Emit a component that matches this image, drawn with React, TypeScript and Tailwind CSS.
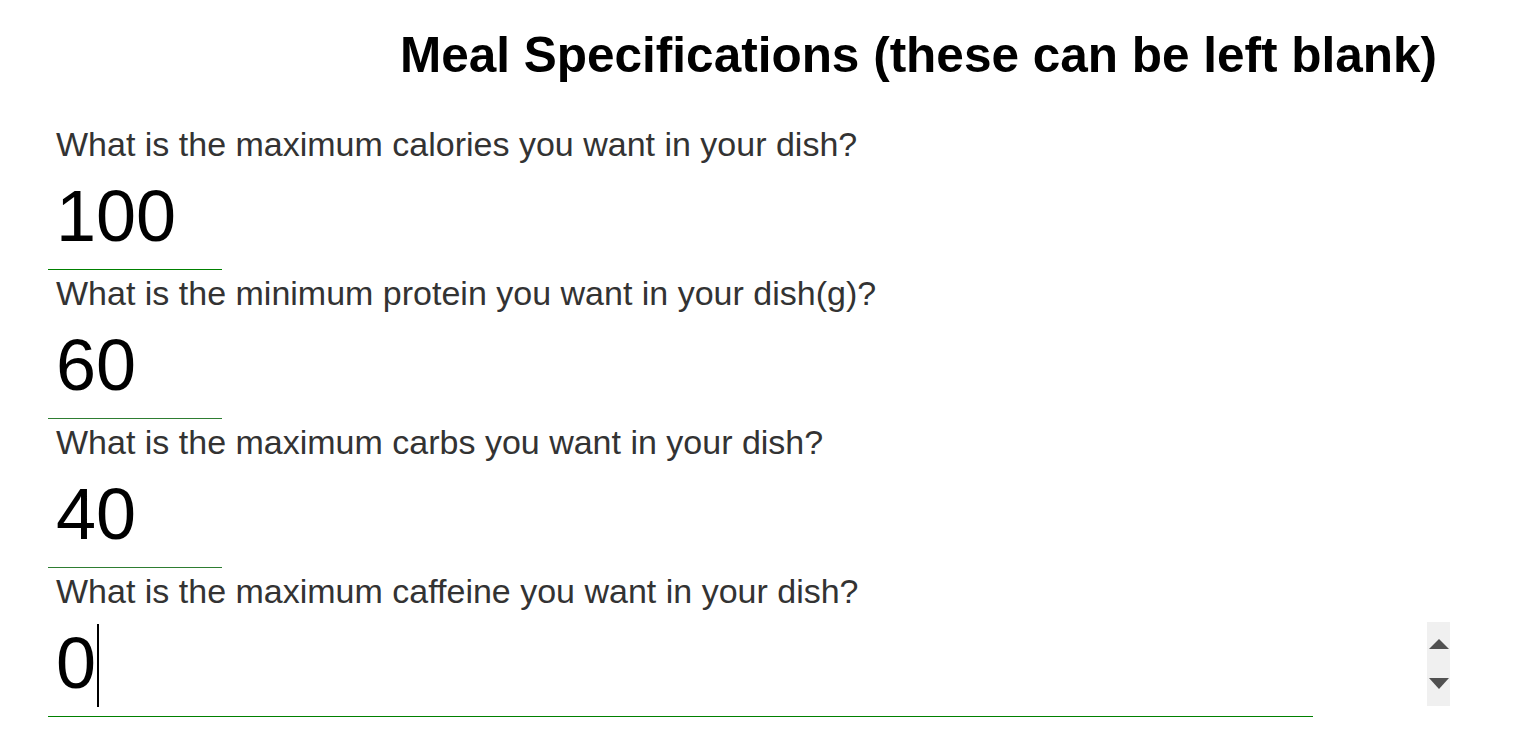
import React from "react";

const rows = [
  { label: "What is the maximum calories you want in your dish?", value: "100", line: "border-[#008000]", wide: false },
  { label: "What is the minimum protein you want in your dish(g)?", value: "60", line: "border-[#2e7d32]", wide: false },
  { label: "What is the maximum carbs you want in your dish?", value: "40", line: "border-[#2e7d32]", wide: false },
  { label: "What is the maximum caffeine you want in your dish?", value: "0", line: "border-[#008000]", wide: true },
];

function Spinner() {
  return (
    <div className="flex h-[84px] w-[23px] flex-col items-center justify-between bg-[#f0f0f0] pt-[17px] pb-[17px]">
      <svg width="20" height="10" viewBox="0 0 20 10">
        <polygon points="10,0 20,10 0,10" fill="#505050" />
      </svg>
      <svg width="20" height="11" viewBox="0 0 20 11">
        <polygon points="0,0 20,0 10,11" fill="#505050" />
      </svg>
    </div>
  );
}

export default function App() {
  return (
    <div className="min-h-[742px] w-[1534px] bg-white" style={{ fontFamily: '"Liberation Sans", Arial, sans-serif' }}>
      <div className="pt-[27px] pl-[400px]">
        <h1 className="text-[49.5px] font-bold leading-[56px] text-black">
          Meal Specifications (these can be left blank)
        </h1>
      </div>
      <div className="mt-[38px] pl-[48px]">
        {rows.map((r) => (
          <div key={r.label} className="pt-[3px]">
            <div className="pl-[8px] text-[34px] leading-[40px] text-[#333333]">{r.label}</div>
            <div className="flex items-start">
              <div
                className={`flex h-[106px] items-start border-b ${r.line} pl-[8px] pt-[2px] ${r.wide ? "w-[1265px]" : "w-[174px]"}`}
              >
                <span className="text-[72px] leading-[101px] text-black">{r.value}</span>
                {r.wide && <span className="ml-[1px] mt-[11px] h-[83px] w-[2px] bg-black" />}
              </div>
              {r.wide && (
                <div className="ml-[114px] mt-[11px]">
                  <Spinner />
                </div>
              )}
            </div>
          </div>
        ))}
      </div>
    </div>
  );
}
